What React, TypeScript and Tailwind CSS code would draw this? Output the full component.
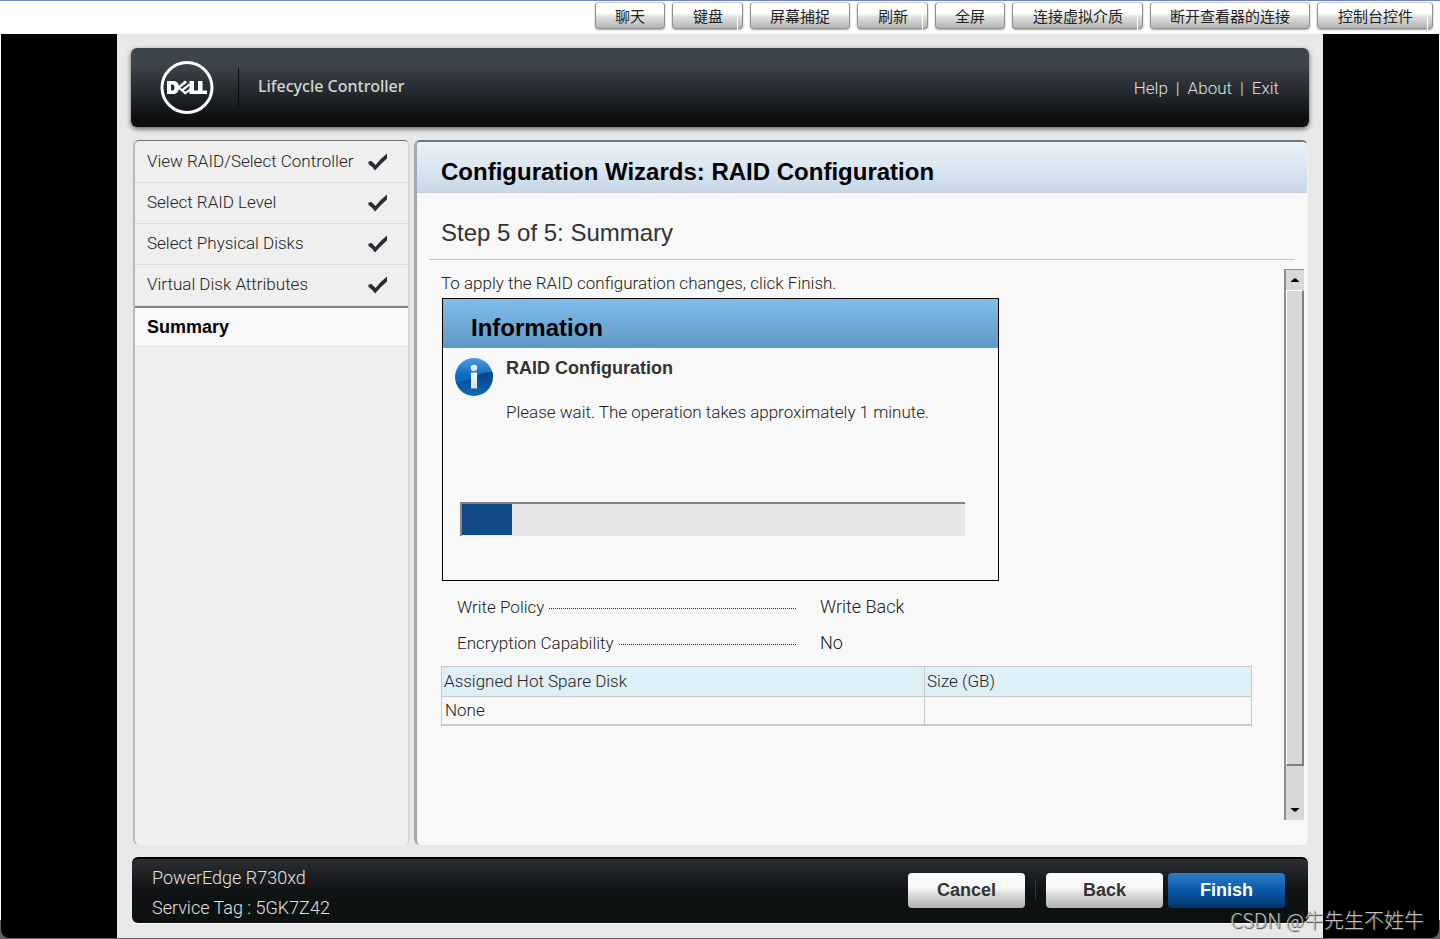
import { clsx } from 'clsx';

const viewerActions = [
  { label: '聊天', divided: false },
  { label: '键盘', divided: true },
  { label: '屏幕捕捉', divided: false },
  { label: '刷新', divided: true },
  { label: '全屏', divided: false },
  { label: '连接虚拟介质', divided: true },
  { label: '断开查看器的连接', divided: false },
  { label: '控制台控件', divided: true },
];

const doneSteps = [
  'View RAID/Select Controller',
  'Select RAID Level',
  'Select Physical Disks',
  'Virtual Disk Attributes',
];

const attributes = [
  { label: 'Read Policy', value: '' },
  { label: 'Write Policy', value: 'Write Back' },
  { label: 'Encryption Capability', value: 'No' },
];

const DellLogo = () => (
  <svg width="54" height="54" viewBox="0 0 54 54" fill="none" role="img" aria-label="Dell">
    <circle cx="27" cy="26.500" r="25" stroke="#fff" strokeWidth="3" />
    <g fill="#fff">
      <path fillRule="evenodd" d="M7 20h6c4 0 6 2.500 6 6.500S17 33 13 33H7zM11 23.500v6h1c1.800 0 2.500-1 2.500-3s-.7-3-2.500-3z" />
      <path d="M17 26.500 25 19.500l2.300 1.800-7 5.500 1.500 1.300 7-5.500 1.900 1.500-7 5.500 1.600 1.200 5.700-4.300v3L25 33.500z" />
      <path d="M29.500 20h4.500v9.500H39V33h-9.500zM38 20h4.500v9.500H47V33h-9z" />
    </g>
  </svg>
);

const CheckMark = () => (
  <svg width="20" height="18" viewBox="0 0 20 18" aria-hidden="true">
    <path d="M0.500 8.500 3.500 8l4 4Q12.500 5.500 19 0.500V5.500Q12.500 11 7 17.500Q4.500 13.500 0.500 11z" fill="#272f36" />
  </svg>
);

const InfoIcon = () => (
  <svg width="38" height="38" viewBox="0 0 38 38" aria-hidden="true">
    <defs>
      <linearGradient id="ball" x1="0" y1="0" x2="0" y2="1">
        <stop offset="0" stopColor="#4e9ce0" />
        <stop offset="0.450" stopColor="#0a6cc4" />
        <stop offset="1" stopColor="#0f66b8" />
      </linearGradient>
      <linearGradient id="shade" x1="0" y1="0" x2="0" y2="1">
        <stop offset="0" stopColor="#043f80" />
        <stop offset="1" stopColor="#0f68b9" />
      </linearGradient>
      <linearGradient id="stem" x1="0" y1="0" x2="0" y2="1">
        <stop offset="0" stopColor="#fff" />
        <stop offset="1" stopColor="#d3d8dc" />
      </linearGradient>
    </defs>
    <circle cx="19" cy="19" r="19" fill="url(#ball)" />
    <path d="M1 24Q10 24 19 19T37.500 14A19 19 0 0 1 1 24z" fill="url(#shade)" />
    <circle cx="19" cy="10" r="3.300" fill="url(#stem)" />
    <rect x="16" y="14.500" width="6" height="16" rx="0.500" fill="url(#stem)" />
  </svg>
);

const ViewerBar = () => (
  <div className="flex h-[34px] shrink-0 items-start justify-end gap-[7px] border-t border-[#6f87b8] bg-white pr-[7px] pt-px">
    {viewerActions.map(({ label, divided }) => (
      <button
        key={label}
        type="button"
        className={clsx(
          'relative h-[27px] rounded border border-[#8f8f8f] border-t-[#c4c4c4] bg-linear-to-b from-white from-40% via-[#dfe0e0] via-55% to-[#b4b5b5] px-[19px] pt-px text-[15px] font-normal leading-[26px] text-[#222] shadow-[0_1px_2px_rgba(0,0,0,0.35)]',
          divided && 'pl-5 after:absolute after:-bottom-1 after:right-1 after:-top-px after:w-px after:bg-white',
        )}
      >
        {label}
      </button>
    ))}
  </div>
);

const Header = () => (
  <header className="flex h-[79px] items-center rounded-md bg-linear-to-b from-[#3d444b] from-20% via-[#20262a] via-60% to-[#0d0e0f] to-90% pl-[29px] pr-[30px] shadow-[0_2px_5px_rgba(0,0,0,0.6)]">
    <DellLogo />
    <span className="ml-6 h-10 w-px bg-[#0b0d0f]" />
    <span className="ml-[19px] pb-1 font-['Noto_Sans'] text-[16px] font-medium text-[#d4d6d8]">Lifecycle Controller</span>
    <nav className="ml-auto flex gap-2 pt-0.5 text-[17px] text-[#e0e0e0]">
      <a href="#help">Help</a>
      <span>|</span>
      <a href="#about">About</a>
      <span>|</span>
      <a href="#exit">Exit</a>
    </nav>
  </header>
);

const Steps = () => (
  <aside className="w-[277px] shrink-0 rounded-md border-x-2 border-t border-[#b3bac0] border-r-[#d3d7da] border-t-[#66727c] bg-[#efefef] pt-px text-[17px] text-[#222]">
    <ol>
      {doneSteps.map((step) => (
        <li key={step} className="flex h-[41px] items-center justify-between border-b border-[#dcdcdc] pl-3 pr-5 last:border-0">
          <span>{step}</span>
          <CheckMark />
        </li>
      ))}
      <li className="flex h-[41px] items-center border-b border-t-2 border-b-[#e2e2e2] border-t-[#858585] bg-[#f8f8f8] pl-3 font-['Liberation_Sans'] text-[18px] font-bold text-black">
        Summary
      </li>
    </ol>
  </aside>
);

const ScrollBar = () => (
  <div className="flex w-5 shrink-0 flex-col border-l-2 border-t border-[#8f8f8f] bg-[#d8d8d8]">
    <button type="button" aria-label="Scroll up" className="flex h-5 shrink-0 items-center justify-center">
      <svg width="10" height="4" viewBox="0 0 10 4"><path d="M0.500 4 4 0.500h2L9.500 4z" fill="#000" /></svg>
    </button>
    <div className="grow-14 border-b-2 border-l border-r-2 border-t border-b-[#808080] border-l-white border-r-[#808080] border-t-white" />
    <div className="grow" />
    <button type="button" aria-label="Scroll down" className="flex h-5 shrink-0 items-center justify-center">
      <svg width="10" height="4" viewBox="0 0 10 4"><path d="M0.500 0h9L6 3.500H4z" fill="#000" /></svg>
    </button>
  </div>
);

const ProgressDialog = () => (
  <div
    role="dialog"
    aria-labelledby="dialog-title"
    className="absolute left-px top-[29px] h-[283px] w-[557px] border border-black bg-[#f8f8f8]"
  >
    <h3 id="dialog-title" className="h-[49px] bg-linear-to-b from-[#80bfed] to-[#6098c4] pl-7 pt-1 font-['Liberation_Sans'] text-[24px] font-bold leading-[50px] text-black">
      Information
    </h3>
    <div className="flex gap-[13px] pl-3 pt-2.5">
      <InfoIcon />
      <div>
        <h4 className="font-['Liberation_Sans'] text-[18px] font-bold leading-5 text-[#333]">RAID Configuration</h4>
        <p className="mt-6 leading-5">Please wait. The operation takes approximately 1 minute.</p>
      </div>
    </div>
    <div role="progressbar" aria-valuenow={10} className="ml-[17px] mr-[33px] mt-20 h-[34px] border-l-2 border-t-2 border-[#858585] bg-[#e7e7e7] pb-px">
      <div className="h-full bg-[#124a88]" style={{ width: '10%' }} />
    </div>
  </div>
);

const SpareTable = () => (
  <table className="mr-8 mt-1 table-fixed border-collapse border border-b-2 border-[#c9c9c9] text-left">
    <thead>
      <tr className="h-[30px] bg-[#dfeff8]">
        <th className="w-[483px] border border-[#c9c9c9] px-0.5 font-light">Assigned Hot Spare Disk</th>
        <th className="border border-[#c9c9c9] px-0.5 font-light">Size (GB)</th>
      </tr>
    </thead>
    <tbody>
      <tr className="h-7">
        <td className="border border-[#c9c9c9] px-[3px]">None</td>
        <td className="border border-[#c9c9c9]" />
      </tr>
    </tbody>
  </table>
);

const Wizard = () => (
  <main className="flex min-w-0 flex-1 flex-col overflow-hidden rounded-md border-l-[3px] border-r border-t-2 border-l-[#a2a9b0] border-r-[#edf1f2] border-t-[#6a7883] bg-[#f8f8f8] text-[17px] text-[#222]">
    <h1 className="h-[51px] border-b border-[#c3cde0] bg-linear-to-b from-[#e9f2f8] via-[#dbe6f2] to-[#c6d7e6] pl-6 pt-[5px] font-['Liberation_Sans'] text-[24px] font-bold leading-[50px] text-black">
      Configuration Wizards: RAID Configuration
    </h1>
    <h2 className="ml-3 mr-3 h-[67px] border-b border-[#c6c6c6] pl-3 pt-5 font-['Liberation_Sans'] text-[24px] leading-10 text-[#333]">
      Step 5 of 5: Summary
    </h2>
    <div className="mb-[25px] mr-[3px] mt-[9px] flex flex-1 pl-6">
      <div className="relative flex flex-1 flex-col">
        <p className="leading-7">To apply the RAID configuration changes, click Finish.</p>
        <dl className="mt-[257px]">
          {attributes.map(({ label, value }) => (
            <div key={label} className="flex h-9 items-center pl-4">
              <dt className="flex w-[339px] items-center gap-[5px] whitespace-nowrap">
                {label}
                <span className="h-px flex-1 border-t border-dotted border-[#333]" />
              </dt>
              <dd className="ml-6 pb-1 text-[18px]">{value}</dd>
            </div>
          ))}
        </dl>
        <SpareTable />
        <ProgressDialog />
      </div>
      <ScrollBar />
    </div>
  </main>
);

const footerButton =
  "h-[35px] w-[117px] rounded-sm font-['Liberation_Sans'] text-[18px] font-bold";

const Footer = () => (
  <footer className="mx-px flex h-[66px] items-center rounded-md border-t-2 border-black bg-linear-to-b from-[#2b3035] via-[#101214] via-50% to-[#0a1212] pl-5 pr-[23px] text-[18px] text-[#e2e2e2] shadow-[0_1px_1px_#fff]">
    <div className="pt-1 leading-[30px]">
      <p>PowerEdge R730xd</p>
      <p>Service Tag : 5GK7Z42</p>
    </div>
    <div className="ml-auto flex items-center pb-0.5">
      <button type="button" className={clsx(footerButton, 'bg-linear-to-b from-[#fafafa] from-40% via-[#dcdcdc] via-60% to-[#b2b2b2] text-[#333]')}>
        Cancel
      </button>
      <span className="mx-2.5 h-5 w-px bg-[#30363a]" />
      <button type="button" className={clsx(footerButton, 'bg-linear-to-b from-[#fafafa] from-40% via-[#dcdcdc] via-60% to-[#b2b2b2] text-[#333]')}>
        Back
      </button>
      <button type="button" className={clsx(footerButton, 'ml-[5px] bg-linear-to-b from-[#2b7fc8] via-[#0859a8] via-50% to-[#023468] text-white')}>
        Finish
      </button>
    </div>
  </footer>
);

export default function App() {
  return (
    <div className="relative flex min-h-screen flex-col bg-linear-to-b from-white from-98% to-[#626262] to-98% font-['Roboto','Noto_Sans_CJK_SC',sans-serif] font-light">
      <ViewerBar />
      <div className="mx-px mb-px flex flex-1 flex-col rounded-b-lg bg-black px-[116px]">
        <div className="flex flex-1 flex-col bg-[#e8e8e8] px-[14px] pb-[15px] pt-[14px]">
          <Header />
          <div className="mb-3 ml-0.5 mr-px mt-[13px] flex flex-1 gap-1">
            <Steps />
            <Wizard />
          </div>
          <Footer />
        </div>
      </div>
      <p className="absolute bottom-1 right-4 font-['Noto_Sans_CJK_SC',sans-serif] text-[20px] leading-[30px] text-[#c0c0c0] [text-shadow:1px_1px_1px_#444]">
        CSDN @牛先生不姓牛
      </p>
    </div>
  );
}
